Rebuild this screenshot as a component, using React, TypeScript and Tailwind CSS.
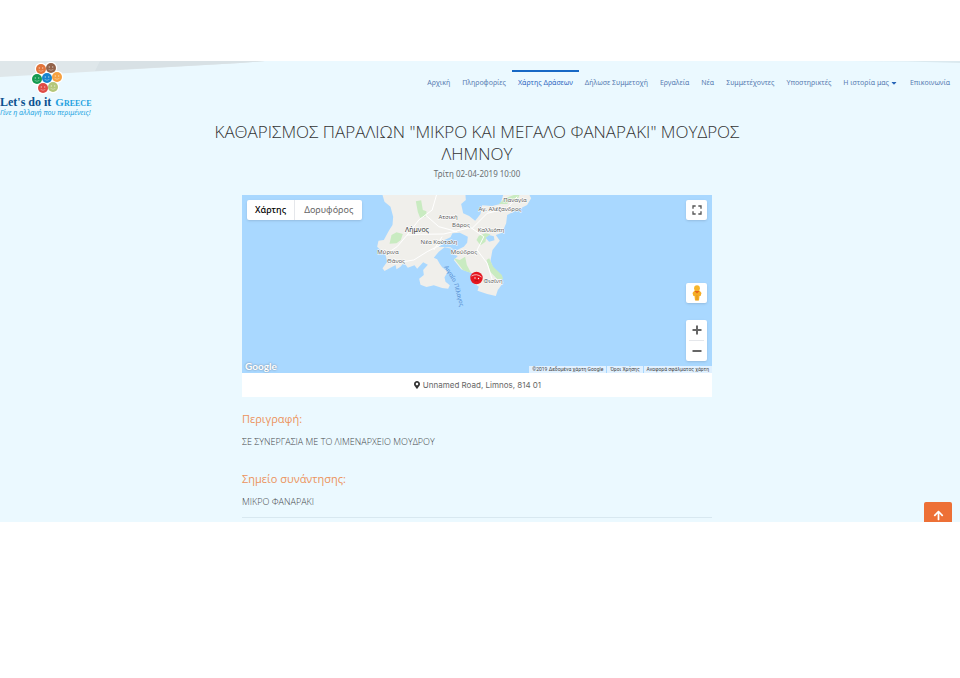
import { FaArrowUp, FaCaretDown, FaMapMarkerAlt } from "react-icons/fa";
import { MdFullscreen } from "react-icons/md";

interface NavItem {
  label: string;
  active?: boolean;
  dropdown?: boolean;
}

const navItems: NavItem[] = [
  { label: "Αρχική" },
  { label: "Πληροφορίες" },
  { label: "Χάρτης Δράσεων", active: true },
  { label: "Δήλωσε Συμμετοχή" },
  { label: "Εργαλεία" },
  { label: "Νέα" },
  { label: "Συμμετέχοντες" },
  { label: "Υποστηρικτές" },
  { label: "Η ιστορία μας", dropdown: true },
  { label: "Επικοινωνία" },
];

const faces = [
  { x: 11, y: 7, color: "#e2743a" },
  { x: 21, y: 6, color: "#93634a" },
  { x: 7, y: 17, color: "#169a50" },
  { x: 17, y: 16, color: "#1684cf" },
  { x: 27, y: 15, color: "#f6a141" },
  { x: 13, y: 26, color: "#df4b46" },
  { x: 23, y: 25, color: "#b4c77a" },
];

const places = [
  { name: "Παναγία", x: 273, y: 7 },
  { name: "Αγ. Αλέξανδρος", x: 258, y: 16 },
  { name: "Ατσική", x: 206, y: 24 },
  { name: "Βάρος", x: 219, y: 32 },
  { name: "Καλλιόπη", x: 249, y: 37 },
  { name: "Νέα Κούταλη", x: 197, y: 49 },
  { name: "Μύρινα", x: 146, y: 59 },
  { name: "Μούδρος", x: 222, y: 59 },
  { name: "Θάνος", x: 154, y: 68 },
  { name: "Φισίνη", x: 251, y: 88 },
];

const sections = [
  { title: "Περιγραφή:", text: "ΣΕ ΣΥΝΕΡΓΑΣΙΑ ΜΕ ΤΟ ΛΙΜΕΝΑΡΧΕΙΟ ΜΟΥΔΡΟΥ" },
  { title: "Σημείο συνάντησης:", text: "ΜΙΚΡΟ ΦΑΝΑΡΑΚΙ" },
];

function Logo() {
  return (
    <a href="#" className="block w-24 pt-px whitespace-nowrap">
      <svg viewBox="0 0 34 32" className="ml-[30px] h-8 w-[34px]">
        {faces.map((f) => (
          <circle key={f.color} cx={f.x} cy={f.y} r="6.2" fill="#fff" />
        ))}
        {faces.map((f) => (
          <g key={f.color} transform={`translate(${f.x} ${f.y})`}>
            <circle r="5" fill={f.color} />
            <circle cx="-1.7" cy="-1" r="0.7" fill="#fff" opacity="0.6" />
            <circle cx="1.7" cy="-1" r="0.7" fill="#fff" opacity="0.6" />
            <path d="M-2.4 1.4Q0 3.2 2.4 1.4" fill="none" stroke="#fff" strokeWidth="0.6" opacity="0.6" />
          </g>
        ))}
      </svg>
      <span className="block font-['Liberation_Serif',serif] leading-[14px] font-bold">
        <span className="text-[12px] text-[#0b5290]">Let's do it</span>{" "}
        <span className="text-[11px] text-[#1ba0e0] [font-variant:small-caps]">Greece</span>
      </span>
      <span className="block font-['Noto_Sans',sans-serif] text-[7px] leading-[8px] text-[#27a5e2] italic">
        Γίνε η αλλαγή που περιμένεις!
      </span>
    </a>
  );
}

function Header() {
  return (
    <header className="relative flex items-start justify-between">
      <svg viewBox="0 0 960 18" preserveAspectRatio="none" className="absolute inset-x-0 top-0 h-[18px] w-full">
        <path d="M0 0H265L240 2L120 9L0 16Z" fill="#dfe7ea" />
        <path d="M100 0H265L240 2L95 10Z" fill="#d8e1e5" />
        <path d="M850 0H960V2Q910 0 850 0Z" fill="#dbe9ef" />
      </svg>
      <div className="relative">
        <Logo />
      </div>
      <nav className="mt-[9px] mr-1 font-['Noto_Sans',sans-serif]">
        <ul className="flex">
          {navItems.map((item) => (
            <li key={item.label}>
              <a
                href="#"
                className={`flex items-center border-t-2 px-1.5 pt-[3px] text-[7px] leading-4 whitespace-nowrap ${
                  item.active ? "border-[#1668c5] text-[#3068c0]" : "border-transparent text-[#587cb2]"
                }`}
              >
                {item.label}
                {item.dropdown && <FaCaretDown className="ml-px size-2 text-[#2765b8]" />}
              </a>
            </li>
          ))}
        </ul>
      </nav>
    </header>
  );
}

function IslandMap() {
  return (
    <svg viewBox="0 0 470 178" preserveAspectRatio="xMidYMin slice" className="absolute inset-0 h-full w-full">
      <rect width="470" height="178" fill="#a9d8ff" />
      <g transform="translate(128.5 -5) scale(0.3333)">
        <path
          d="M36 15L42 35L60 50L68 80L66 105L55 122L40 150L24 152L20 170L32 182L45 195L50 215L36 235L42 243L75 225L78 238L90 230L100 218L112 233L132 226L140 236L158 217L172 224L158 240L160 255L146 266L150 284L168 291L190 286L215 294L233 296L238 286L225 275L222 262L232 245L215 232L208 222L200 208L190 203L205 185L222 172L250 178L240 190L262 198L250 210L272 238L305 250L308 278L325 290L321 302L350 312L376 318L382 300L399 277L370 240L360 212L366 180L388 152L376 135L395 128L407 100L410 75L440 60L470 45L482 25L477 15H398L390 42L365 48L335 46L330 72L314 92L296 78L278 70L272 42L286 30L285 15Z"
          fill="#f0efeb"
        />
        <path d="M205 170L222 150L240 142L246 130L268 128L292 140L290 158L280 170L255 182L240 172Z" fill="#a9d8ff" />
        <path d="M345 143L355 135L370 139L372 151L356 155Z" fill="#a9d8ff" />
        <path
          d="M136 34L152 31L157 60L168 64L167 79L149 84L142 66ZM63 135L78 127L97 132L91 150L78 160L57 161ZM385 42L403 25L430 15H447L443 25L420 30L410 42ZM325 137L345 130L360 133L347 142L345 155L330 166L318 150ZM250 205L268 210L284 200L289 225L302 249L278 241ZM348 210L356 205L368 230L394 255L398 268L380 267L360 246Z"
          fill="#c9ebc1"
        />
        <g fill="none" stroke="#fff" strokeWidth="3">
          <path d="M50 190L80 170L110 135L150 133L220 132L270 120L300 112L340 140L320 180L350 220L365 268" />
          <path d="M110 135L145 90L185 60L198 15M165 75L205 110L260 125M70 220L130 210L170 185L220 160M305 115L350 70L410 55L440 20M190 180L215 140" />
        </g>
      </g>
      <g
        className="font-['Noto_Sans','Open_Sans',sans-serif]"
        fontSize="6"
        fill="#5c5c5c"
        stroke="#fff"
        strokeWidth="1"
        paintOrder="stroke"
        textAnchor="middle"
      >
        {places.map((p) => (
          <text key={p.name} x={p.x} y={p.y}>
            {p.name}
          </text>
        ))}
        <text x="175" y="37" fontSize="7" fill="#333">
          Λήμνος
        </text>
      </g>
      <g className="font-['Noto_Sans','Open_Sans',sans-serif]" fontSize="6" fill="#5089cf">
        <text transform="translate(202 72) rotate(58)">Αιγαίο</text>
        <text transform="translate(212 89) rotate(75)">Πέλαγος</text>
      </g>
      <g transform="translate(234.500 83)">
        <circle r="6.200" fill="#e5161f" />
        <path d="M-5 -2Q0 -5 5 -1" fill="none" stroke="#fff" strokeWidth="0.7" />
        <circle cx="-1.500" cy="0" r="0.700" fill="#fff" />
        <circle cx="2" cy="0.500" r="0.700" fill="#fff" />
        <path d="M-2 3Q0 2 2 3" fill="none" stroke="#a80b13" strokeWidth="0.8" />
      </g>
    </svg>
  );
}

function Pegman() {
  return (
    <svg viewBox="0 0 12 16" className="h-4 w-3">
      <path d="M3.500 5.500H8.500L10.500 8L9.600 11H8.500L8 15.500H4L3.500 11H2.400L1.500 8Z" fill="#f5ad25" />
      <path d="M4 6.500L6 8.500L8 6.500V5.500H4Z" fill="#e5641b" />
      <path d="M6 10V15.500" stroke="#d58b1b" strokeWidth="0.6" />
      <circle cx="6" cy="3.200" r="2.900" fill="#f7b62b" />
    </svg>
  );
}

function ActionMap() {
  return (
    <div className="relative h-[178px] overflow-hidden">
      <IslandMap />
      <div className="absolute top-[5px] left-[5px] flex h-5 rounded-xs bg-white font-['Noto_Sans',sans-serif] text-[9px] shadow-sm">
        <button className="border-r border-gray-200 px-2 font-medium text-black">Χάρτης</button>
        <button className="px-[9px] text-[#666]">Δορυφόρος</button>
      </div>
      <div className="absolute top-[5px] right-[5px] flex w-[21px] flex-col">
        <button aria-label="Πλήρης οθόνη" className="flex h-5 items-center justify-center rounded-xs bg-white text-[#555] shadow-sm">
          <MdFullscreen className="size-4" />
        </button>
        <button aria-label="Street View" className="mt-[63px] flex h-5 items-center justify-center rounded-xs bg-white shadow-sm">
          <Pegman />
        </button>
        <div className="mt-[17px] flex flex-col rounded-xs bg-white text-[#666] shadow-sm">
          <button aria-label="Μεγέθυνση" className="flex h-5 items-center justify-center">
            <svg viewBox="0 0 10 10" className="size-[10px]">
              <path d="M5 0.500V9.500M0.500 5H9.500" stroke="currentColor" strokeWidth="2" />
            </svg>
          </button>
          <span className="mx-[3px] h-px bg-gray-200" />
          <button aria-label="Σμίκρυνση" className="flex h-5 items-center justify-center">
            <svg viewBox="0 0 10 10" className="size-[10px]">
              <path d="M0.500 5H9.500" stroke="currentColor" strokeWidth="2" />
            </svg>
          </button>
        </div>
      </div>
      <span className="absolute bottom-0 left-[3px] font-['Lato',sans-serif] text-[10px] leading-[14px] font-bold text-white [text-shadow:0_0_2px_#6b7f90]">
        Google
      </span>
      <div className="absolute right-0 bottom-0 flex gap-px font-['Roboto',sans-serif] text-[5px] leading-[7px] whitespace-nowrap text-[#444]">
        <span className="bg-white/65 px-[3px]">©2019 Δεδομένα χάρτη Google</span>
        <a href="#" className="bg-white/65 px-[3px]">
          Όροι Χρήσης
        </a>
        <a href="#" className="bg-white/65 px-[3px]">
          Αναφορά σφάλματος χάρτη
        </a>
      </div>
    </div>
  );
}

export default function App() {
  return (
    <div className="min-h-screen bg-white py-[61px] font-['Open_Sans','Noto_Sans',sans-serif]">
      <div className="relative overflow-hidden bg-[#ebf9ff]">
        <Header />
        <main className="pr-[6px] pb-1 text-[#44484b]">
          <div className="mx-auto max-w-[540px] pt-1 text-center">
            <h1 className="text-[17px] leading-[22px] font-light text-[#333]">
              ΚΑΘΑΡΙΣΜΟΣ ΠΑΡΑΛΙΩΝ "ΜΙΚΡΟ ΚΑΙ ΜΕΓΑΛΟ ΦΑΝΑΡΑΚΙ" ΜΟΥΔΡΟΣ ΛΗΜΝΟΥ
            </h1>
            <p className="mt-[3px] font-['Noto_Sans',sans-serif] text-[8px] leading-3 text-[#6a6e71]">
              Τρίτη 02-04-2019 10:00
            </p>
          </div>
          <div className="mx-auto mt-[15px] max-w-[470px]">
            <ActionMap />
            <p className="flex h-6 items-center justify-center gap-[2px] bg-white font-['Inter',sans-serif] text-[8px] text-[#666]">
              <FaMapMarkerAlt className="size-2 text-[#333]" />
              Unnamed Road, Limnos, 814 01
            </p>
            <div className="mt-[14px] flex flex-col gap-[22px] border-b border-[#d8e8f0] pb-2">
              {sections.map((s) => (
                <section key={s.title}>
                  <h2 className="text-[11px] leading-4 text-[#eb935c]">{s.title}</h2>
                  <p className="mt-2 text-[9px] leading-[14px] font-light">{s.text}</p>
                </section>
              ))}
            </div>
          </div>
        </main>
        <button
          aria-label="Επιστροφή στην κορυφή"
          className="absolute right-2 bottom-0 flex h-5 w-7 items-center justify-center rounded-t-xs bg-[#ed7036] pt-[6px] text-white"
        >
          <FaArrowUp className="size-[11px]" />
        </button>
      </div>
    </div>
  );
}
